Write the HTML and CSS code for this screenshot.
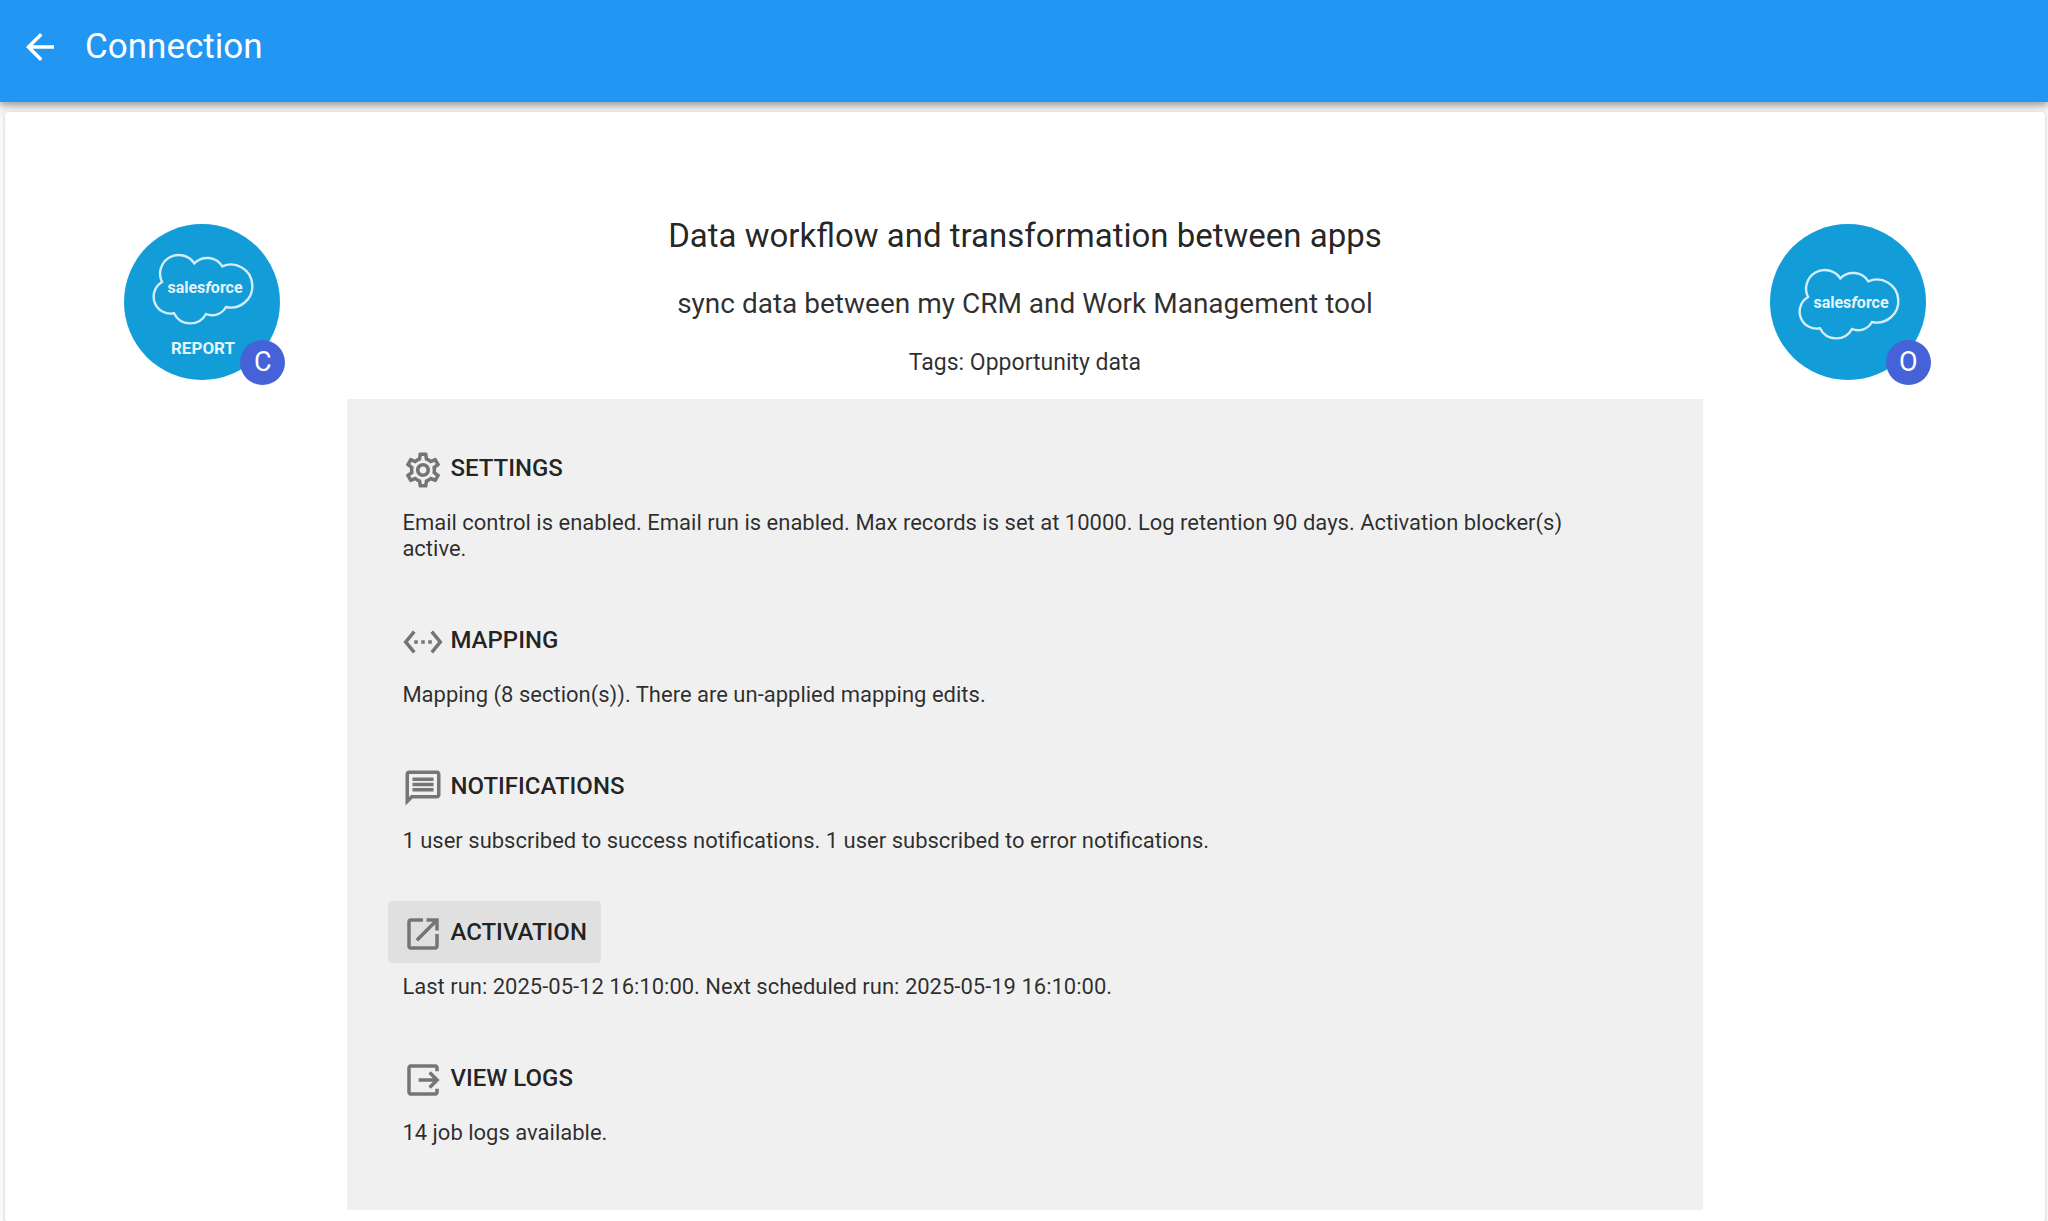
FILE: index.html
```html
<!DOCTYPE html>
<html lang="en">
<head>
<meta charset="UTF-8" />
<meta name="viewport" content="width=device-width, initial-scale=1" />
<title>Connection</title>
<link rel="stylesheet" href="styles.css">
</head>
<body>

<header class="toolbar">
  <button class="back-btn" aria-label="Back">
    <svg viewBox="0 0 24 24"><path d="M20 11H7.83l5.59-5.59L12 4l-8 8 8 8 1.41-1.41L7.83 13H20v-2z"/></svg>
  </button>
  <h1>Connection</h1>
</header>

<main class="card">
  <!-- Source app -->
  <div class="app">
    <div class="app-logo">
      <svg viewBox="0 0 156 156" role="img" aria-label="Salesforce report">
        <circle cx="78" cy="78" r="78"/>
        <g id="cloud">
          <path class="cloud-line" d="M38 58A18.7 18.7 0 0 1 70.3 39.3A18 18 0 0 1 98.3 42.3A21.5 21.5 0 1 1 102 83A16 16 0 0 1 82 90A18 18 0 0 1 50 89.3A17 17 0 0 1 38 58Z"/>
          <text class="brand" x="81" y="69">sales<tspan class="brand-f">f</tspan>orce</text>
        </g>
        <text class="kind" x="79" y="130">REPORT</text>
      </svg>
      <span class="badge">C</span>
    </div>
  </div>

  <div class="details">
    <h2>Data workflow and transformation between apps</h2>
    <h3>sync data between my CRM and Work Management tool</h3>
    <p class="tags">Tags: Opportunity data</p>

    <div class="panel">
      <section>
        <button class="action">
          <svg viewBox="0 0 24 24"><path d="M19.43 12.98c.04-.32.07-.64.07-.98 0-.34-.03-.66-.07-.98l2.11-1.65c.19-.15.24-.42.12-.64l-2-3.46c-.09-.16-.26-.25-.44-.25-.06 0-.12.01-.17.03l-2.49 1c-.52-.4-1.08-.73-1.69-.98l-.38-2.65C14.46 2.18 14.25 2 14 2h-4c-.25 0-.46.18-.49.42l-.38 2.65c-.61.25-1.17.59-1.69.98l-2.49-1c-.06-.02-.12-.03-.18-.03-.17 0-.34.09-.43.25l-2 3.46c-.13.22-.07.49.12.64l2.11 1.65c-.04.32-.07.65-.07.98 0 .33.03.66.07.98l-2.11 1.65c-.19.15-.24.42-.12.64l2 3.46c.09.16.26.25.44.25.06 0 .12-.01.17-.03l2.49-1c.52.4 1.08.73 1.69.98l.38 2.65c.03.24.24.42.49.42h4c.25 0 .46-.18.49-.42l.38-2.65c.61-.25 1.17-.59 1.69-.98l2.49 1c.06.02.12.03.18.03.17 0 .34-.09.43-.25l2-3.46c.12-.22.07-.49-.12-.64l-2.11-1.65zm-1.98-1.71c.04.31.05.52.05.73 0 .21-.02.43-.05.73l-.14 1.13.89.7 1.08.84-.7 1.21-1.27-.51-1.04-.42-.9.68c-.43.32-.84.56-1.25.73l-1.06.43-.16 1.13-.2 1.35h-1.4l-.19-1.35-.16-1.13-1.06-.43c-.43-.18-.83-.41-1.23-.71l-.91-.7-1.06.43-1.27.51-.7-1.21 1.08-.84.89-.7-.14-1.13c-.03-.31-.05-.54-.05-.74s.02-.43.05-.73l.14-1.13-.89-.7-1.08-.84.7-1.21 1.27.51 1.04.42.9-.68c.43-.32.84-.56 1.25-.73l1.06-.43.16-1.13.2-1.35h1.39l.19 1.35.16 1.13 1.06.43c.43.18.83.41 1.23.71l.91.7 1.06-.43 1.27-.51.7 1.21-1.07.85-.89.7.14 1.13zM12 8c-2.21 0-4 1.79-4 4s1.79 4 4 4 4-1.79 4-4-1.79-4-4-4zm0 6c-1.1 0-2-.9-2-2s.9-2 2-2 2 .9 2 2-.9 2-2 2z"/></svg>
          SETTINGS
        </button>
        <p>Email control is enabled. Email run is enabled. Max records is set at 10000. Log retention 90 days. Activation blocker(s) active.</p>
      </section>

      <section>
        <button class="action">
          <svg viewBox="0 0 24 24"><path d="M7.77 6.76L6.23 5.48.82 12l5.41 6.52 1.54-1.28L3.42 12l4.35-5.24zM7 13h2v-2H7v2zm10-2h-2v2h2v-2zm-6 2h2v-2h-2v2zm6.77-7.52l-1.54 1.28L20.58 12l-4.35 5.24 1.54 1.28L23.18 12l-5.41-6.52z"/></svg>
          MAPPING
        </button>
        <p>Mapping (8 section(s)). There are un-applied mapping edits.</p>
      </section>

      <section>
        <button class="action">
          <svg viewBox="0 0 24 24"><path d="M4 4h16v12H5.17L4 17.17V4m0-2c-1.1 0-1.99.9-1.99 2L2 22l4-4h14c1.1 0 2-.9 2-2V4c0-1.1-.9-2-2-2H4zm2 10h12v2H6v-2zm0-3h12v2H6V9zm0-3h12v2H6V6z"/></svg>
          NOTIFICATIONS
        </button>
        <p>1 user subscribed to success notifications. 1 user subscribed to error notifications.</p>
      </section>

      <section>
        <button class="action active">
          <svg viewBox="0 0 24 24"><path d="M19 19H5V5h7V3H5c-1.11 0-2 .9-2 2v14c0 1.1.89 2 2 2h14c1.1 0 2-.9 2-2v-7h-2v7zM14 3v2h3.59l-9.83 9.83 1.41 1.41L19 6.41V10h2V3h-7z"/></svg>
          ACTIVATION
        </button>
        <p>Last run: 2025-05-12 16:10:00. Next scheduled run: 2025-05-19 16:10:00.</p>
      </section>

      <section>
        <button class="action">
          <svg viewBox="0 0 24 24"><path d="M19 7V5H5v14h14v-2h2v2c0 1.1-.9 2-2 2H5c-1.1 0-2-.9-2-2V5c0-1.1.9-2 2-2h14c1.1 0 2 .9 2 2v2h-2z"/><path d="M16.5 7L15.1 8.4 17.7 11H9.5v2h8.2l-2.6 2.6 1.4 1.4 5-5-5-5z"/></svg>
          VIEW LOGS
        </button>
        <p>14 job logs available.</p>
      </section>
    </div>
  </div>

  <!-- Target app -->
  <div class="app">
    <div class="app-logo">
      <svg viewBox="0 0 156 156" role="img" aria-label="Salesforce">
        <circle cx="78" cy="78" r="78"/>
        <use href="#cloud" y="15"/>
      </svg>
      <span class="badge">O</span>
    </div>
  </div>
</main>

</body>
</html>
```
FILE: styles.css
```css
* {
  margin: 0;
  padding: 0;
  box-sizing: border-box;
}

body {
  font-family: Roboto, "Liberation Sans", sans-serif;
  background: #fafafa;
  color: rgba(0, 0, 0, 0.87);
  overflow-x: hidden;
}

button {
  font: inherit;
  color: inherit;
  background: none;
  border: none;
  cursor: pointer;
}

/* Toolbar */
.toolbar {
  display: flex;
  align-items: center;
  gap: 24px;
  padding: 20px 19px 28px;
  background: #2196f3;
  color: #fff;
  box-shadow: 0 3px 6px rgba(0, 0, 0, 0.26), 0 6px 14px rgba(0, 0, 0, 0.16);
}

.back-btn,
.back-btn svg {
  display: block;
  width: 42px;
  height: 42px;
  fill: #fff;
}

.toolbar h1 {
  font-size: 35px;
  font-weight: 400;
  line-height: 54px;
}

/* Card */
.card {
  display: grid;
  grid-template-columns: 15% 70% 15%;
  min-height: calc(100vh - 112px);
  margin: 10px 3px 0 5px;
  padding: 96px 52px 12px;
  background: #fff;
  border-radius: 4px;
  box-shadow: 0 2px 4px rgba(0, 0, 0, 0.2);
}

.app {
  display: flex;
  justify-content: center;
  align-items: flex-start;
  padding-top: 16px;
}

.app-logo {
  position: relative;
  width: 156px;
}

.app-logo svg {
  display: block;
  width: 100%;
  fill: #129cd8;
}

.cloud-line {
  fill: none;
  stroke: #d5edf8;
  stroke-width: 2.4;
}

.brand,
.kind {
  fill: #e4f4fb;
  font-weight: 700;
  text-anchor: middle;
}

.brand {
  font-size: 16px;
}

.brand-f {
  font-style: italic;
}

.kind {
  font-size: 17px;
}

.badge {
  position: absolute;
  right: -5px;
  bottom: -5px;
  width: 45px;
  height: 45px;
  border-radius: 50%;
  background: #4562d8;
  color: #fff;
  font-size: 27px;
  line-height: 45px;
  text-align: center;
}

/* Connection details */
.details {
  text-align: center;
}

.details h2 {
  font-size: 33px;
  font-weight: 400;
  line-height: 56px;
}

.details h3 {
  margin-top: 20px;
  font-size: 28px;
  font-weight: 400;
  line-height: 40px;
}

.tags {
  margin-top: 21px;
  font-size: 23px;
  line-height: 36px;
}

.details h3,
.tags,
.panel p {
  color: rgba(0, 0, 0, 0.82);
}

.panel {
  display: flex;
  flex-direction: column;
  gap: 47px;
  margin-top: 18px;
  padding: 38px 76px 64px 41px;
  background: #f0f0f0;
  text-align: left;
}

.action {
  display: inline-flex;
  align-items: center;
  gap: 6px;
  padding: 10px 14px;
  border-radius: 4px;
  font-size: 24px;
  font-weight: 500;
  line-height: 42px;
}

.action.active {
  background: #e0e0e0;
}

/* icons sit slightly below the label's middle */
.action svg {
  width: 42px;
  height: 42px;
  margin: 2px 0 -2px;
  fill: #757575;
}

.panel p {
  margin-top: 11px;
  padding-left: 14px;
  font-size: 22px;
  line-height: 26px;
}
```
